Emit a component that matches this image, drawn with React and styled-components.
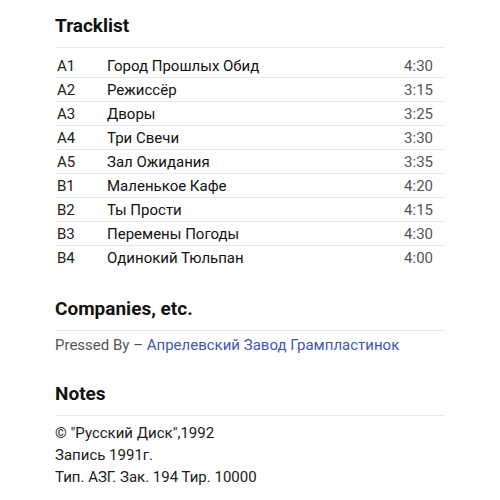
import React from "react";
import styled, { createGlobalStyle } from "styled-components";

const GlobalStyle = createGlobalStyle`
  body {
    margin: 0;
    background: #fff;
    font-family: Roboto, "Liberation Sans", sans-serif;
    color: #1b1b1b;
  }
`;

const Page = styled.div`
  width: 390px;
  padding: 13px 0 0 55px;
`;

const Section = styled.section`
  margin-bottom: ${(p) => p.gap || 0}px;
`;

const Heading = styled.h2`
  margin: 0;
  font-size: 19px;
  font-weight: 700;
  line-height: 26px;
  color: #111;
  padding-bottom: 8px;
  border-bottom: 1px solid #e8e8e8;
`;

const Table = styled.div`
  display: flex;
  flex-direction: column;
  padding-top: 6px;
`;

const Row = styled.div`
  display: grid;
  grid-template-columns: 50px 1fr auto;
  align-items: center;
  height: 23px;
  padding: 0 12px 0 2px;
  font-size: 15px;
  border-bottom: 1px solid ${(p) => (p.last ? "transparent" : "#e8e8e8")};
`;

const Pos = styled.span`
  color: #222;
`;

const Title = styled.span`
  color: #111;
`;

const Duration = styled.span`
  color: #555;
`;

const Credit = styled.p`
  margin: 0;
  padding-top: 4px;
  font-size: 15px;
  line-height: 20px;
  color: #555;

  & a {
    color: #4257b2;
    text-decoration: none;
  }
`;

const Notes = styled.div`
  padding-top: 6px;
  font-size: 15px;
  line-height: 22px;
  color: #1b1b1b;
`;

const tracks = [
  ["A1", "Город Прошлых Обид", "4:30"],
  ["A2", "Режиссёр", "3:15"],
  ["A3", "Дворы", "3:25"],
  ["A4", "Три Свечи", "3:30"],
  ["A5", "Зал Ожидания", "3:35"],
  ["B1", "Маленькое Кафе", "4:20"],
  ["B2", "Ты Прости", "4:15"],
  ["B3", "Перемены Погоды", "4:30"],
  ["B4", "Одинокий Тюльпан", "4:00"],
];

export default function App() {
  return (
    <>
      <GlobalStyle />
      <Page>
        <Section gap={26}>
          <Heading>Tracklist</Heading>
          <Table>
            {tracks.map(([pos, title, time], i) => (
              <Row key={pos} last={i === tracks.length - 1}>
                <Pos>{pos}</Pos>
                <Title>{title}</Title>
                <Duration>{time}</Duration>
              </Row>
            ))}
          </Table>
        </Section>
        <Section gap={26}>
          <Heading>Companies, etc.</Heading>
          <Credit>
            Pressed By – <a href="#">Апрелевский Завод Грампластинок</a>
          </Credit>
        </Section>
        <Section>
          <Heading>Notes</Heading>
          <Notes>
            © "Русский Диск",1992
            <br />
            Запись 1991г.
            <br />
            Тип. АЗГ. Зак. 194 Тир. 10000
          </Notes>
        </Section>
      </Page>
    </>
  );
}
